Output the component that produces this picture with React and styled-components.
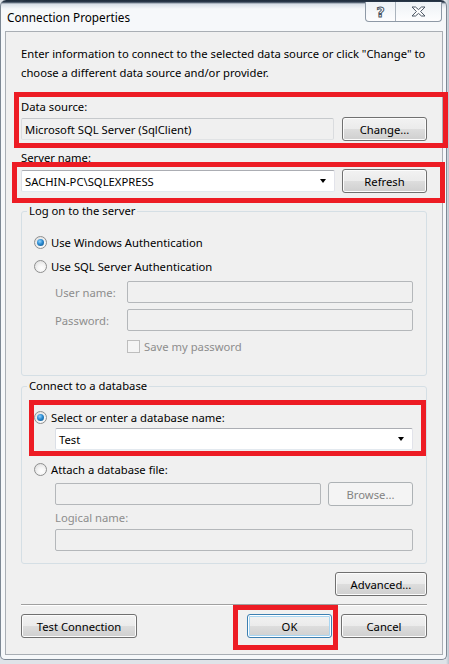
import React from 'react';
import styled, { createGlobalStyle, css } from 'styled-components';

const FONT = `"Noto Sans", "Liberation Sans", sans-serif`;

const GlobalStyle = createGlobalStyle`
  html, body {
    margin: 0;
    padding: 0;
    background: #c9d2dd;
  }
  body {
    font-family: ${FONT};
    font-size: 11.25px;
    color: #000;
  }
`;

const Screen = styled.div`
  position: relative;
  width: 449px;
  height: 664px;
  overflow: hidden;
  background: linear-gradient(90deg, #dfe3e8 0, #dfe3e8 446px, #b9c3ce 449px);
`;

const Window = styled.div`
  width: 447px;
  height: 660px;
  box-sizing: border-box;
  display: flex;
  flex-direction: column;
  padding: 0 3px 4px 4px;
  border: 1px solid #7d8894;
  border-top: none;
  border-radius: 6px 6px 5px 5px;
  background: linear-gradient(#1f2c3b 0, #2c3b4d 2px, #d7dee6 4px, #f6f8fa 9px, #f6f8fa 100%);
`;

const TitleBar = styled.div`
  height: 31px;
  display: flex;
  justify-content: space-between;
  align-items: flex-start;
`;

const Title = styled.div`
  padding: 10px 0 0 2px;
  font-size: 11.75px;
  line-height: 14px;
  color: #000;
`;

const CaptionGroup = styled.div`
  display: flex;
  margin: 2px 1px 0 0;
  height: 19px;
  border: 1px solid #8e99a6;
  border-top: none;
  border-radius: 0 0 4px 4px;
  background: linear-gradient(#eef2f6, #fdfdfe);
  overflow: hidden;
`;

const CaptionButton = styled.div`
  width: ${p => p.$w}px;
  display: flex;
  align-items: center;
  justify-content: center;
  & + & {
    border-left: 1px solid #aab3bd;
  }
`;

const HelpGlyph = styled.span`
  font-family: "DejaVu Sans", sans-serif;
  font-weight: bold;
  font-size: 14px;
  line-height: 14px;
  color: #fff;
  -webkit-text-stroke: 1px #4b5664;
`;

const Client = styled.div`
  flex: 1;
  display: flex;
  flex-direction: column;
  border: 1px solid #a9aeb4;
  background: #f0f0f0;
  padding: 12px 15px 0 15px;
`;

const Intro = styled.p`
  margin: 0;
  line-height: 19px;
`;

const FieldLabel = styled.div`
  line-height: 16px;
  margin-top: ${p => p.$top}px;
  padding-left: ${p => p.$indent ?? 0}px;
  color: ${p => (p.$dim ? '#8d8d8d' : '#000')};
`;

const Row = styled.div`
  display: flex;
  align-items: center;
  gap: ${p => p.$gap ?? 8}px;
  margin-top: ${p => p.$top ?? 0}px;
  padding-left: ${p => p.$indent ?? 0}px;
  height: ${p => p.$h ?? 24}px;
`;

const boxLook = {
  readonly: css`
    background: #f0f0f0;
    border-color: #c6c9cc #dadcdf #e1e3e5 #dadcdf;
  `,
  white: css`
    background: #fff;
    border-color: #abadb3 #e2e3ea #e3e9ef #dbdfe6;
  `,
  disabled: css`
    background: #f0f0f0;
    border-color: #b4b7ba;
  `,
};

const TextBox = styled.div`
  flex: 1;
  height: 22px;
  box-sizing: border-box;
  display: flex;
  align-items: center;
  padding: 0 3px;
  border: 1px solid;
  border-radius: 2px;
  ${p => boxLook[p.$look || 'white']}
`;

const BoxText = styled.span`
  flex: 1;
  white-space: nowrap;
`;

const Arrow = styled.span`
  width: 0;
  height: 0;
  margin-right: 5px;
  border-left: 3.5px solid transparent;
  border-right: 3.5px solid transparent;
  border-top: 4px solid #000;
`;

const Button = styled.button`
  width: ${p => p.$w ?? 85}px;
  height: 24px;
  box-sizing: border-box;
  padding: 0;
  font-family: ${FONT};
  font-size: 11.25px;
  color: #000;
  border: 1px solid #707070;
  border-radius: 3px;
  background: linear-gradient(#f2f2f2 0%, #ebebeb 50%, #dddddd 51%, #cfcfcf 100%);
  box-shadow: inset 0 0 0 1px #fcfcfc;
  ${p =>
    p.$primary &&
    css`
      border-color: #3c7fb1;
      box-shadow: inset 0 0 0 1px #fff, inset 0 0 0 2px #a7d5f2;
    `}
  &:disabled {
    color: #838383;
    border-color: #adb2b5;
    background: #f4f4f4;
    box-shadow: none;
  }
`;

const GroupBox = styled.fieldset`
  margin: ${p => p.$top}px 0 0 0;
  padding: 15px 13px ${p => p.$bottom}px 12px;
  border: 1px solid #d5dfe5;
  border-radius: 3px;
  min-width: 0;
`;

const Legend = styled.legend`
  margin-left: -7px;
  padding: 0 2px;
  line-height: 16px;
`;

const Option = styled.label`
  display: flex;
  align-items: center;
  height: 16px;
  margin-top: ${p => p.$top ?? 0}px;
  padding-left: ${p => p.$indent ?? 0}px;
  gap: 4px;
`;

const Radio = styled.span`
  position: relative;
  width: 13px;
  height: 13px;
  box-sizing: border-box;
  border-radius: 50%;
  border: 1px solid #8e8f8f;
  background: radial-gradient(circle at 60% 65%, #ffffff 0, #f4f4f4 40%, #d6d6d6 100%);
  &::after {
    content: '';
    position: absolute;
    left: 2px;
    top: 2px;
    width: 7px;
    height: 7px;
    border-radius: 50%;
    display: ${p => (p.$checked ? 'block' : 'none')};
    background: radial-gradient(circle at 40% 35%, #8fd3ff 0, #2b8ad0 45%, #0d4f82 100%);
  }
`;

const DimLabel = styled.span`
  width: 72px;
  color: #8d8d8d;
`;

const CheckBox = styled.span`
  width: 13px;
  height: 13px;
  box-sizing: border-box;
  border: 1px solid #bdbdbd;
  background: #f4f4f4;
`;

const DimText = styled.span`
  color: #8d8d8d;
`;

const Separator = styled.div`
  height: 1px;
  margin-top: 8px;
  background: #a0a0a0;
  box-shadow: 0 1px 0 #fff;
`;

const ButtonBar = styled.div`
  display: flex;
  align-items: center;
  margin-top: ${p => p.$top}px;
  justify-content: ${p => (p.$end ? 'flex-end' : 'space-between')};
`;

const Pair = styled.div`
  display: flex;
  gap: 9px;
`;

const Mark = styled.div`
  position: absolute;
  left: ${p => p.$x}px;
  top: ${p => p.$y}px;
  width: ${p => p.$w}px;
  height: ${p => p.$h}px;
  box-sizing: border-box;
  border: 5px solid #ed1c24;
  pointer-events: none;
`;

const CloseIcon = () => (
  <svg width="15" height="11" viewBox="0 0 15 11">
    <polygon
      points="1,1 4.5,1 7.5,3.6 10.5,1 14,1 9.6,5.5 14,10 10.5,10 7.5,7.4 4.5,10 1,10 5.4,5.5"
      fill="#fff"
      stroke="#4b5664"
      strokeWidth="1"
      strokeLinejoin="round"
    />
  </svg>
);

export default function App() {
  return (
    <Screen>
      <GlobalStyle />
      <Window>
        <TitleBar>
          <Title>Connection Properties</Title>
          <CaptionGroup>
            <CaptionButton $w={29}>
              <HelpGlyph>?</HelpGlyph>
            </CaptionButton>
            <CaptionButton $w={45}>
              <CloseIcon />
            </CaptionButton>
          </CaptionGroup>
        </TitleBar>

        <Client>
          <Intro>
            Enter information to connect to the selected data source or click "Change" to
            <br />
            choose a different data source and/or provider.
          </Intro>

          <FieldLabel $top={17}>Data source:</FieldLabel>
          <Row $top={2}>
            <TextBox $look="readonly">
              <BoxText>Microsoft SQL Server (SqlClient)</BoxText>
            </TextBox>
            <Button>Change...</Button>
          </Row>

          <FieldLabel $top={9}>Server name:</FieldLabel>
          <Row $top={3} $gap={7}>
            <TextBox>
              <BoxText>SACHIN-PC\SQLEXPRESS</BoxText>
              <Arrow />
            </TextBox>
            <Button>Refresh</Button>
          </Row>

          <GroupBox $top={10} $bottom={21}>
            <Legend>Log on to the server</Legend>
            <Option>
              <Radio $checked />
              Use Windows Authentication
            </Option>
            <Option $top={8}>
              <Radio />
              Use SQL Server Authentication
            </Option>
            <Row $top={7} $gap={0} $indent={21} $h={22}>
              <DimLabel>User name:</DimLabel>
              <TextBox $look="disabled" />
            </Row>
            <Row $top={6} $gap={0} $indent={21} $h={22}>
              <DimLabel>Password:</DimLabel>
              <TextBox $look="disabled" />
            </Row>
            <Option as="div" $top={7} $indent={93}>
              <CheckBox />
              <DimText>Save my password</DimText>
            </Option>
          </GroupBox>

          <GroupBox $top={2} $bottom={12}>
            <Legend>Connect to a database</Legend>
            <Option>
              <Radio $checked />
              Select or enter a database name:
            </Option>
            <Row $top={3} $indent={21} $h={22}>
              <TextBox>
                <BoxText>Test</BoxText>
                <Arrow />
              </TextBox>
            </Row>
            <Option $top={11}>
              <Radio />
              Attach a database file:
            </Option>
            <Row $top={5} $indent={21} $gap={7}>
              <TextBox $look="disabled" />
              <Button disabled>Browse...</Button>
            </Row>
            <FieldLabel $top={4} $dim $indent={21}>
              Logical name:
            </FieldLabel>
            <Row $top={3} $indent={21} $h={22}>
              <TextBox $look="disabled" />
            </Row>
          </GroupBox>

          <ButtonBar $top={8} $end>
            <Button $w={92}>Advanced...</Button>
          </ButtonBar>
          <Separator />
          <ButtonBar $top={9}>
            <Button $w={116}>Test Connection</Button>
            <Pair>
              <Button $primary>OK</Button>
              <Button $w={86}>Cancel</Button>
            </Pair>
          </ButtonBar>
        </Client>
      </Window>

      <Mark $x={14} $y={92} $w={434} $h={56} />
      <Mark $x={12} $y={162} $w={433} $h={41} />
      <Mark $x={29} $y={400} $w={397} $h={56} />
      <Mark $x={233} $y={605} $w={105} $h={45} />
    </Screen>
  );
}
